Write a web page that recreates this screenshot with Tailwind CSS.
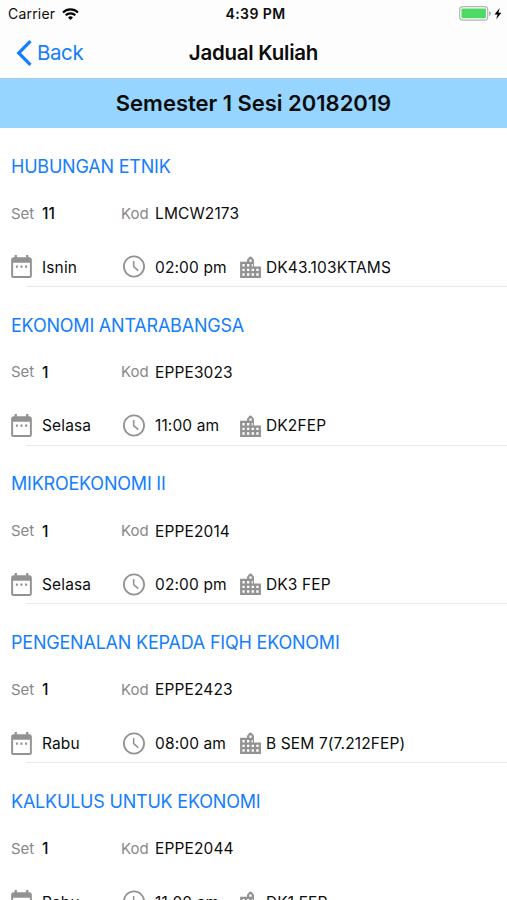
<!DOCTYPE html>
<html lang="ms">
<head>
<meta charset="utf-8">
<title>Jadual Kuliah</title>
<script src="https://cdn.jsdelivr.net/npm/@tailwindcss/browser@4"></script>
</head>
<body class="w-[507px] h-[900px] overflow-hidden bg-white font-['Inter','Liberation_Sans',sans-serif] text-[#0c0c0c]">
<svg class="hidden">
  <symbol id="cal" viewBox="3 2 18 20"><path d="M8.900 11.200H7.100V13h1.800v-1.800zm4 0h-1.800V13h1.800v-1.800zm4 0h-1.800V13h1.800v-1.800zM19 4h-1V2h-2v2H8V2H6v2H5c-1.110 0-1.990.9-1.990 2L3 20c0 1.100.89 2 2 2h14c1.100 0 2-.9 2-2V6c0-1.100-.9-2-2-2zm.3 16.300H4.700V8.700h14.600v11.600z"/></symbol>
  <symbol id="clock" viewBox="2 2 20 20"><path d="M11.990 2C6.470 2 2 6.480 2 12s4.470 10 9.990 10C17.520 22 22 17.520 22 12S17.520 2 11.990 2zM12 20.300c-4.600 0-8.300-3.700-8.300-8.300S7.400 3.700 12 3.700s8.300 3.700 8.300 8.300-3.700 8.300-8.300 8.300zM12.400 7H11v5.500l4.400 3.800 1-1.100-4-3.500z"/></symbol>
  <symbol id="city" viewBox="3 2 18 19"><path d="M15 11V5.200L13.600 3.500Q12 1.500 10.400 3.500L9 5.200V7H3v14h18V11h-6zm-8 8H5v-2h2v2zm0-4H5v-2h2v2zm0-4H5V9h2v2zm4 8H9v-2h2v2zm0-4H9v-2h2v2zm0-4H9V9h2v2zm4 8h-2v-2h2v2zm0-4h-2v-2h2v2zm-2-4V9h1v2h-1zm0-4h-2V5h2v2zm6 12h-2v-2h2v2zm0-4h-2v-2h2v2z"/></symbol>
</svg>
<header class="h-[79px] bg-[#fdfdfd] border-b border-[#a5cbe4]">
  <div class="h-[27px] grid grid-cols-[1fr_auto_1fr] items-center pl-[8px] pr-[4px] text-[14px]">
    <div class="flex items-center gap-[7px]">
      <span class="tracking-[0.2px]">Carrier</span>
      <svg class="w-[17px] h-[12px]" viewBox="0 0 17 12" fill="none" stroke="#000" stroke-width="2.200"><path d="M1 4.500a10.600 10.600 0 0 1 15 0"/><path d="M3.700 7.300a6.800 6.800 0 0 1 9.600 0"/><path d="M8.500 12L6 9.500a3.500 3.500 0 0 1 5 0z" fill="#000" stroke="none"/></svg>
    </div>
    <span class="font-semibold text-[14px] tracking-[0.42px]">4:39 PM</span>
    <div class="flex items-center justify-end">
      <svg class="w-[44px] h-[15px]" viewBox="0 0 44 15"><rect x=".7" y=".7" width="28" height="13.400" rx="3.200" fill="#fdfdfd" stroke="#b4b4b4" stroke-width="1.200"/><rect x="2.500" y="2.500" width="24.400" height="9.800" rx="1" fill="#4cd964"/><path d="M30.200 5v5q1.700-.7 1.700-2.500T30.200 5z" fill="#aaa"/><path d="M40.700 2l-5.200 6.400h3l-1.300 4.900 5.200-6.500h-3z"/></svg>
    </div>
  </div>
  <div class="h-[51px] grid grid-cols-[1fr_auto_1fr] items-center pl-[16px]">
    <div class="flex items-center gap-[5px] text-[#147efb] text-[20.500px]">
      <svg class="w-[16px] h-[26px]" viewBox="0 0 16 26" fill="none" stroke="currentColor" stroke-width="3.200"><path d="M14.500 1.200L2.700 13l11.800 11.800"/></svg>
      <span class="tracking-[-0.4px] pt-px">Back</span>
    </div>
    <h1 class="font-semibold text-[20.500px] tracking-[-0.25px] relative -left-2 pt-px">Jadual Kuliah</h1>
  </div>
</header>
<h2 class="h-[49px] flex items-center justify-center bg-[#95d5ff] font-semibold text-[22px] tracking-[-0.02px]">Semester 1 Sesi 20182019</h2>
<main id="list"></main>
<template id="row">
  <section class="h-[158.75px] flex flex-col">
    <h3 class="h-[77px] pl-[11px] flex items-center text-[18px] tracking-[-0.21px] text-[#147efb] whitespace-nowrap"><span data-f="0"></span></h3>
    <div class="h-[18px] pl-[11px] flex items-center text-[15.500px]">
      <span class="w-[31px] text-[15px] text-[#888]">Set</span><span class="w-[79px] font-medium" data-f="1"></span>
      <span class="w-[34px] text-[15px] text-[#888]">Kod</span><span class="tracking-[0.12px]" data-f="2"></span>
    </div>
    <div class="mt-[28px] h-[32px] pl-[11px] flex items-center text-[15.500px] tracking-[0.13px] whitespace-nowrap fill-[#929292]">
      <svg class="w-[21px] h-[23px] mr-[10px]"><use href="#cal"/></svg><span class="w-[81px] pt-px" data-f="3"></span>
      <svg class="w-[22px] h-[23px] mr-[10px]"><use href="#clock"/></svg><span class="w-[85px] pt-px" data-f="4"></span>
      <svg class="w-[21px] h-[22px] mr-[5px]"><use href="#city"/></svg><span class="pt-px" data-f="5"></span>
    </div>
    <div class="mt-[3px] ml-[26px] h-px bg-[#e9e9e9]"></div>
  </section>
</template>
<script>
const rows = [
  ["HUBUNGAN ETNIK","11","LMCW2173","Isnin","02:00 pm","DK43.103KTAMS"],
  ["EKONOMI ANTARABANGSA","1","EPPE3023","Selasa","11:00 am","DK2FEP"],
  ["MIKROEKONOMI II","1","EPPE2014","Selasa","02:00 pm","DK3 FEP"],
  ["PENGENALAN KEPADA FIQH EKONOMI","1","EPPE2423","Rabu","08:00 am","B SEM 7(7.212FEP)"],
  ["KALKULUS UNTUK EKONOMI","1","EPPE2044","Rabu","11:00 am","DK1 FEP"]
];
const t = document.getElementById("row"), list = document.getElementById("list");
for (const r of rows) {
  const n = t.content.cloneNode(true);
  n.querySelectorAll("[data-f]").forEach(e => e.textContent = r[e.dataset.f]);
  list.append(n);
}
</script>
</body>
</html>
